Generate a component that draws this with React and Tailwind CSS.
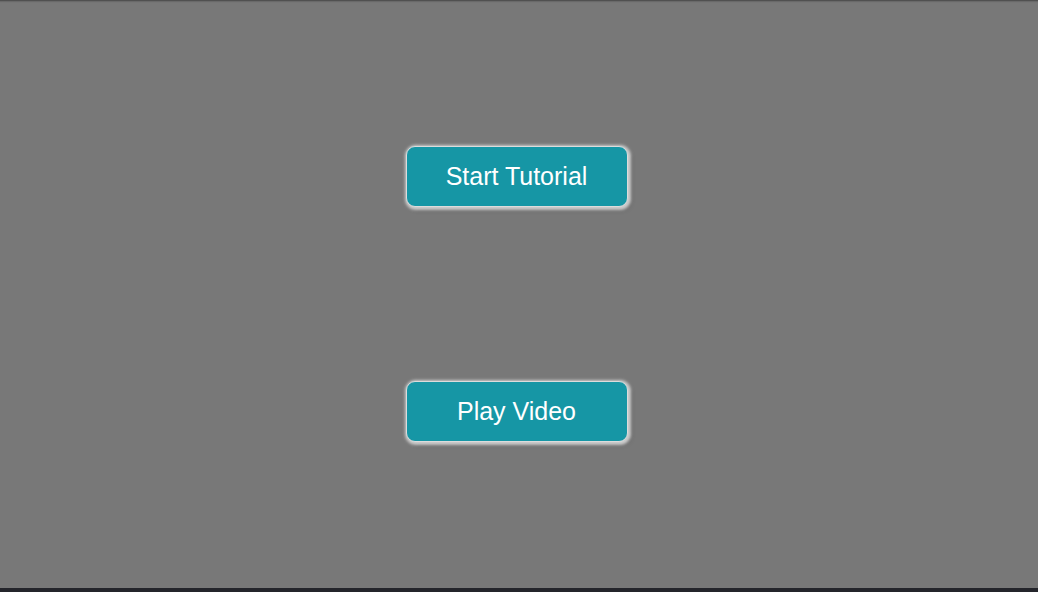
export default function App() {
  return (
    <div className="w-[1038px] h-[592px] flex flex-col bg-[#787878] font-['Liberation_Sans',Arial,sans-serif]">
      {/* main area */}
      <div className="flex-1 flex flex-col items-center justify-center gap-[174px] shadow-[inset_0_3px_2px_-2px_rgba(0,0,0,0.45)]">
        <button className="mr-[5px] w-[222px] h-[61px] rounded-[9px] border border-[#dcdcdc] bg-[#1696a5] text-white text-[25px] leading-none shadow-[1px_1px_3px_2px_#cdcdcd,3px_3px_5px_rgba(0,0,0,0.2)]">
          Start Tutorial
        </button>
        <button className="mr-[5px] w-[222px] h-[61px] rounded-[9px] border border-[#dcdcdc] bg-[#1696a5] text-white text-[25px] leading-none shadow-[1px_1px_3px_2px_#cdcdcd,3px_3px_5px_rgba(0,0,0,0.2)]">
          Play Video
        </button>
      </div>
      <div className="h-[4px] bg-[#24252b]" />
    </div>
  );
}
